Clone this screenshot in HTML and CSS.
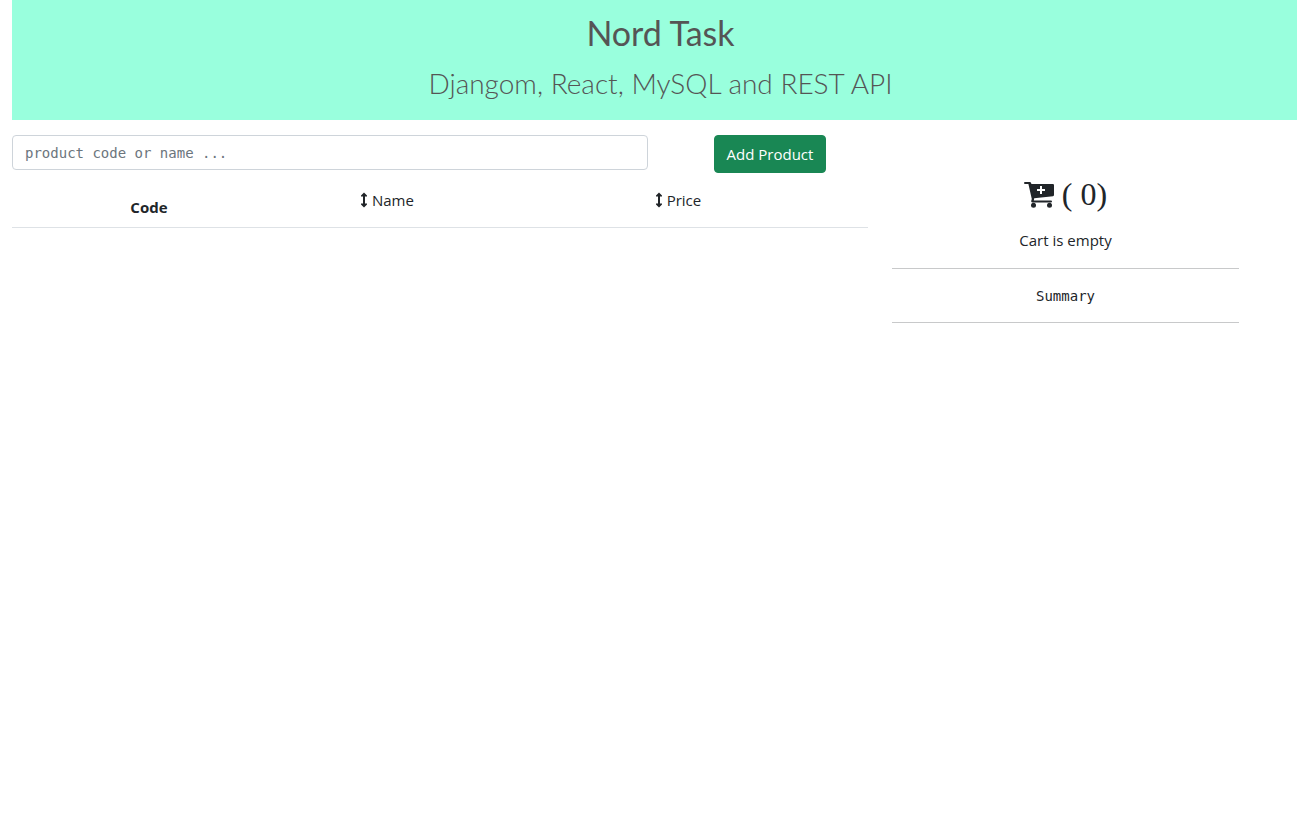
FILE: index.html
```html
<!DOCTYPE html>
<html lang="en">
<head>
<meta charset="utf-8">
<meta name="viewport" content="width=device-width, initial-scale=1">
<title>Nord Task</title>
<link rel="stylesheet" href="styles.css">
</head>
<body>
<header class="banner">
  <h1 class="banner-title">Nord Task</h1>
  <p class="banner-subtitle">Djangom, React, MySQL and REST API</p>
</header>
<main class="layout">
  <section class="products">
    <div class="toolbar">
      <input class="search" type="text" aria-label="Search products" placeholder="product code or name ...">
      <div class="toolbar-action"><button class="add-button" type="button">Add Product</button></div>
    </div>
    <table class="product-table">
      <thead>
        <tr>
          <th class="col-code" scope="col">Code</th>
          <th class="col-name" scope="col"><button class="sort" type="button"><svg class="sort-icon" viewBox="0 0 8 16" aria-hidden="true"><path d="M4 .5 7 3.500V4.500H5v7h2v1L4 15.500 1 12.500v-1h2v-7H1v-1z"/></svg>Name</button></th>
          <th class="col-price" scope="col"><button class="sort" type="button"><svg class="sort-icon" viewBox="0 0 8 16" aria-hidden="true"><path d="M4 .5 7 3.500V4.500H5v7h2v1L4 15.500 1 12.500v-1h2v-7H1v-1z"/></svg>Price</button></th>
        </tr>
      </thead>
    </table>
  </section>
  <aside class="cart">
    <h2 class="cart-title">
      <svg class="cart-icon" viewBox="0 0 30 28" aria-hidden="true"><path fill-rule="evenodd" d="M1 2h4.800q1 0 1.300 1l.3 1h21.500q1.100 0 1.100 1.100V15q0 1-1 1.200L10.200 18.200l-.4 2.200H27q1 0 1 1T27 22.400H8.200q-1.200 0-1-1.400l.6-2L4.400 4H1Q0 4 0 3T1 2zM16 6v3h-3v2h3v3h2v-3h3V9h-3V6z"/><circle cx="9.500" cy="25.300" r="2.500"/><circle cx="25.500" cy="25.300" r="2.500"/></svg>
      <span>( 0)</span>
    </h2>
    <p class="cart-empty">Cart is empty</p>
    <p class="summary">Summary</p>
  </aside>
</main>
</body>
</html>
```
FILE: styles.css
```css
* {
  box-sizing: border-box;
}

body {
  margin: 0;
  padding-left: 12px;
  background: #fff;
  color: #212529;
  font: 15px/24px "Open Sans", "Noto Sans", sans-serif;
}

.banner {
  padding: 8px 0 12px 12px;
  background: #9fd;
  color: #555;
  text-align: center;
  font-family: Lato, sans-serif;
}

.banner-title {
  margin: 0;
  font-size: 34px;
  font-weight: 400;
  line-height: 50px;
}

.banner-subtitle {
  margin: 0;
  font-size: 28px;
  font-weight: 300;
  line-height: 50px;
}

.layout {
  display: grid;
  grid-template-columns: 856fr 347fr;
  gap: 24px;
  padding: 15px 58px 0 0;
}

.toolbar {
  display: grid;
  grid-template-columns: 636fr 196fr;
  gap: 24px;
  align-items: start;
}

.toolbar-action {
  text-align: center;
}

.search {
  width: 100%;
  height: 35px;
  padding: 6px 12px;
  border: 1px solid #ced4da;
  border-radius: 4px;
  color: #212529;
  font: 14px/21px "DejaVu Sans Mono", monospace;
}

.search::placeholder {
  color: #6c757d;
  opacity: 1;
}

.add-button {
  display: block;
  margin: 0 auto;
  padding: 6px 12px;
  border: 1px solid #198754;
  border-radius: 4px;
  background: #198754;
  color: #fff;
  font: inherit;
  cursor: pointer;
}

.product-table {
  width: 100%;
  margin-top: 7px;
  border-collapse: collapse;
  table-layout: fixed;
}

.product-table th {
  padding: 8px;
  border-bottom: 1px solid #dee2e6;
  text-align: center;
  vertical-align: top;
}

.product-table .col-code {
  width: 32%;
  padding: 15px 8px 8px;
}

.product-table .col-name {
  width: 23.6%;
}

.sort {
  display: inline-flex;
  align-items: center;
  gap: 4px;
  padding: 0;
  border: 0;
  background: none;
  color: inherit;
  font: inherit;
  font-weight: 400;
  cursor: pointer;
}

.sort-icon {
  width: 8px;
  height: 16px;
  fill: currentColor;
}

.cart {
  padding-top: 39px;
  text-align: center;
}

.cart-title {
  display: flex;
  justify-content: center;
  align-items: center;
  gap: 8px;
  margin: 0;
  font: 32px/40px "Liberation Serif", serif;
}

.cart-icon {
  width: 30px;
  height: 28px;
  fill: currentColor;
}

.cart-empty {
  margin: 0;
  padding: 14px 0 16px;
  border-bottom: 1px solid #c8c9ca;
}

.summary {
  margin: 0;
  padding: 17px 0 15px;
  border-bottom: 1px solid #c8c9ca;
  font: 14px/21px "DejaVu Sans Mono", monospace;
}
```
